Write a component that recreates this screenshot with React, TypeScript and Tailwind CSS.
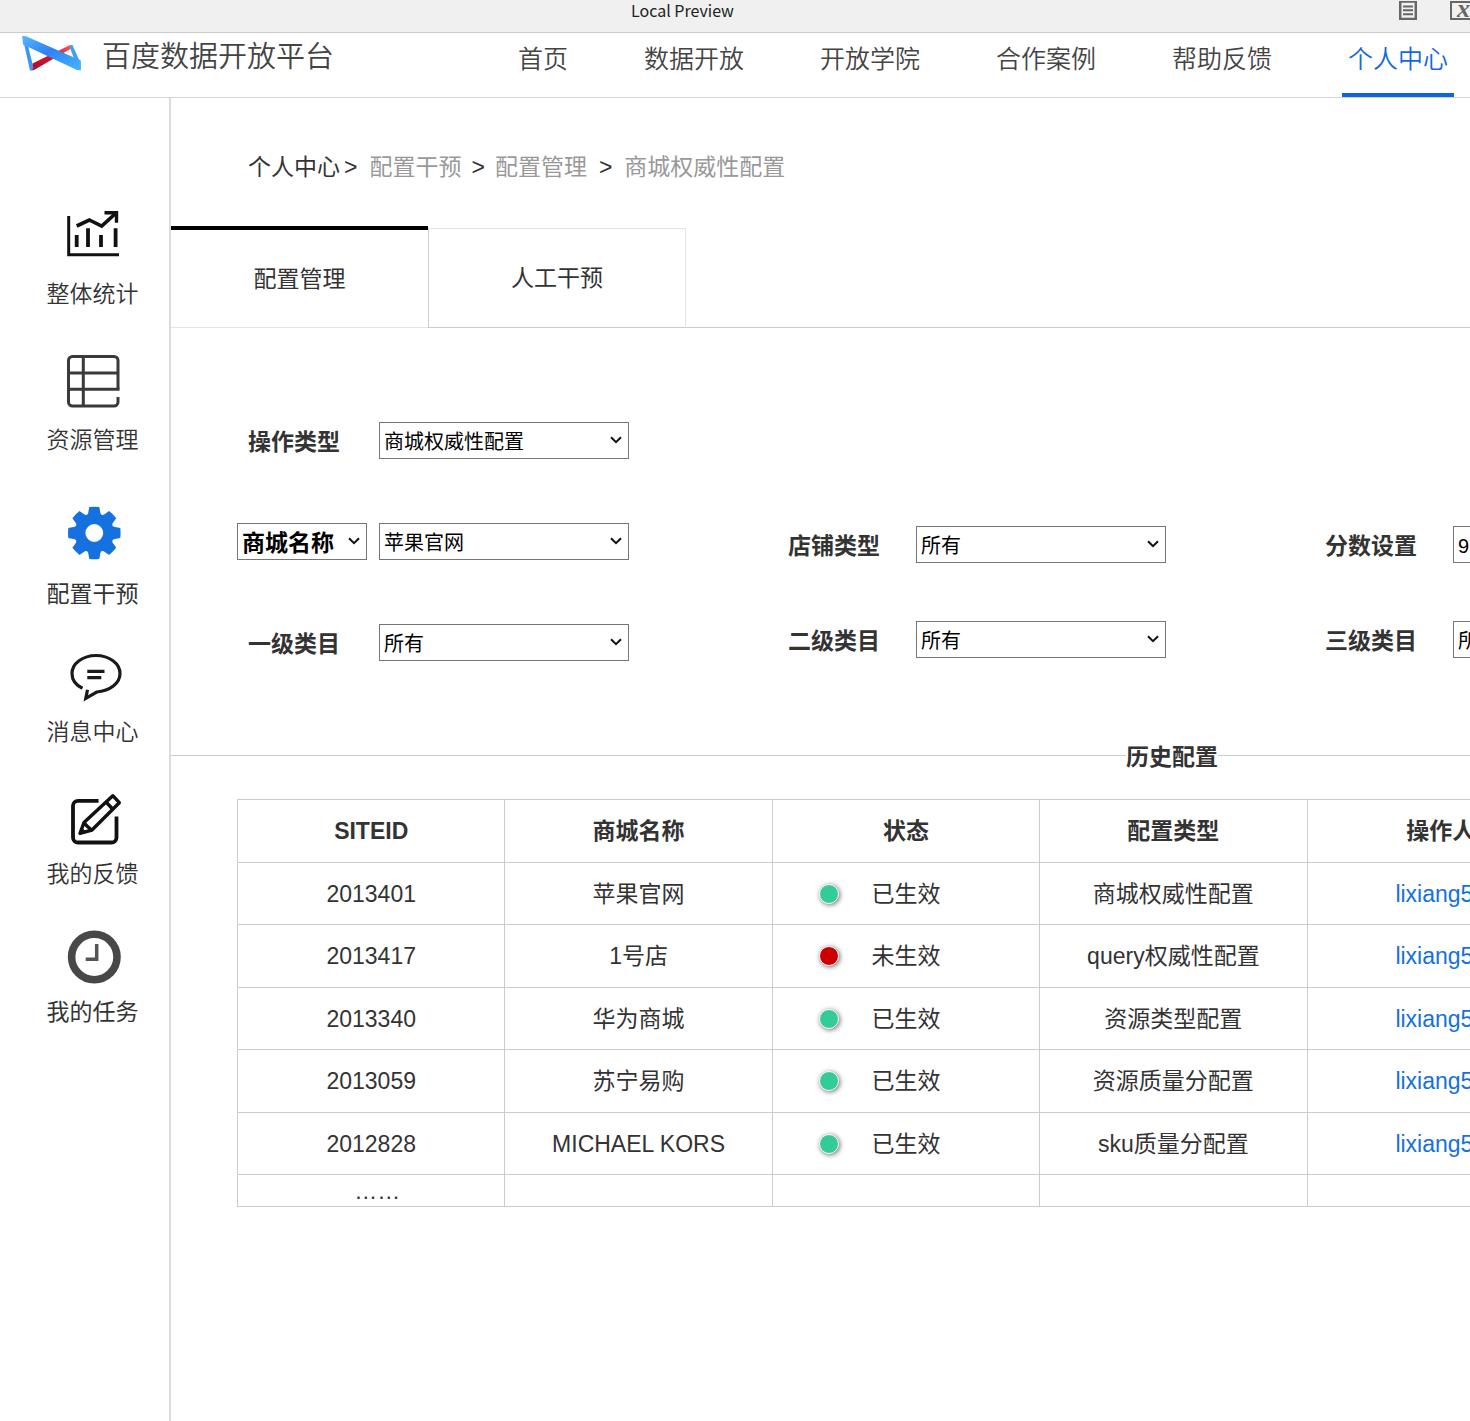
import React, { useState } from 'react';
import clsx from 'clsx';

const StatsIcon = () => (
  <svg className="h-16 w-16" viewBox="0 0 64 64" fill="none" stroke="#111" strokeWidth="3">
    <path d="M7.7 10v38.7H58" />
    <path d="M15.7 20l12.6-6 12.4 6L54.5 7.5" strokeWidth="3.6" />
    <path d="M43.5 6.8h12v10" strokeWidth="3.4" />
    <path d="M15.7 29v12M27 22.3V41M40 29v12M54.6 22.3V41" strokeWidth="3.8" />
  </svg>
);

const ResourceIcon = () => (
  <svg className="h-16 w-16" viewBox="0 0 64 64" fill="none" stroke="#3a3a3a" strokeWidth="3">
    <path d="M57 45v5a4 4 0 0 1-4 4H11.5a4 4 0 0 1-4-4V8.5a4 4 0 0 1 4-4H53a4 4 0 0 1 4 4V37.2" />
    <path d="M22.3 4.5V54M7.5 21H57M7.5 37.2H58.5" />
  </svg>
);

const toothAngles = [0, 45, 90, 135, 180, 225, 270, 315];

const GearIcon = () => (
  <svg className="h-16 w-16" viewBox="0 0 64 64" fill="#1571e0">
    <g transform="translate(33.3 27)">
      <circle r="13.8" fill="none" stroke="#1571e0" strokeWidth="9.8" />
      {toothAngles.map((a) => (
        <path key={a} d="M-5-26Q0-26.6 5-26L6.2-19.5 9-16H-9L-6.2-19.5Z" transform={`rotate(${a})`} />
      ))}
    </g>
  </svg>
);

const MessageIcon = () => (
  <svg className="h-16 w-16" viewBox="0 0 64 64" fill="none" stroke="#1a1a1a" strokeWidth="3.2">
    <path d="M21.5 44.3C14.5 41 11 35.5 11 29.5c0-10 10.7-18 24-18s24 8 24 18c0 9.8-10 17.5-23.3 18.5L24.8 54.3l1.7-8.5" />
    <path d="M26.3 27.3h17.2M26.3 33.7h14" />
  </svg>
);

const FeedbackIcon = () => (
  <svg className="h-16 w-16" viewBox="0 0 64 64" fill="none" stroke="#111" strokeWidth="3.4" strokeLinejoin="round">
    <path d="M37.5 14.8H17a5 5 0 0 0-5 5V51.5a5 5 0 0 0 5 5H50.5a5 5 0 0 0 5-5V30.5" strokeWidth="3.8" />
    <path d="M19 47.3l4-10.8L51.8 9.7l6.5 7L31 44z" />
    <path d="M45 16l6.6 7M23 37l3.5 3.5L30.5 44" />
    <path d="M19 47.3l2-5 3.5 3.5z" fill="#111" strokeWidth="1" />
  </svg>
);

const TaskIcon = () => (
  <svg className="h-16 w-16" viewBox="0 0 64 64" fill="none" stroke="#484848">
    <circle cx="33.3" cy="33" r="22.7" strokeWidth="7.6" />
    <path d="M35.7 20v16.8M37.4 35.2H24.7" stroke="#555" strokeWidth="3.5" />
  </svg>
);

const Logo = () => (
  <svg className="h-9 w-[60px]" viewBox="0 0 60 36">
    <defs>
      <linearGradient id="band" x1="0" y1="0" x2="1" y2="1">
        <stop offset="0" stopColor="#55b8ff" />
        <stop offset="0.45" stopColor="#2d83f5" />
        <stop offset="1" stopColor="#45b4ff" />
      </linearGradient>
      <linearGradient id="ribbon" x1="0" y1="1" x2="1" y2="0">
        <stop offset="0" stopColor="#b0082e" />
        <stop offset="0.55" stopColor="#d0162f" />
        <stop offset="1" stopColor="#ff5a5a" />
      </linearGradient>
    </defs>
    <path d="M9.5 34.5L10.5 27.5 48 9 50 12 12 34z" fill="url(#ribbon)" />
    <path d="M48.5 9L50.5 9 58.5 27V34L56 33 48 12z" fill="#3fa0f5" />
    <path d="M.3 0L5 5.5 11.5 32 10 34.5H8z" fill="#3a97f5" />
    <path d="M.3 0L4 .3 58.8 24.5V34.3L55 34 1 8.5z" fill="url(#band)" />
  </svg>
);

const navItems = ['首页', '数据开放', '开放学院', '合作案例', '帮助反馈', '个人中心'];

const sideItems = [
  { label: '整体统计', icon: StatsIcon, space: 'font-[350]' },
  { label: '资源管理', icon: ResourceIcon, space: 'mt-11 font-[350]' },
  { label: '配置干预', icon: GearIcon, space: 'mt-13' },
  { label: '消息中心', icon: MessageIcon, space: 'mt-9 font-[350]' },
  { label: '我的反馈', icon: FeedbackIcon, space: 'mt-10 font-[350]' },
  { label: '我的任务', icon: TaskIcon, space: 'mt-9' },
];

const rows = [
  { id: '2013401', name: '苹果官网', active: true, type: '商城权威性配置', user: 'lixiang51' },
  { id: '2013417', name: '1号店', active: false, type: 'query权威性配置', user: 'lixiang51' },
  { id: '2013340', name: '华为商城', active: true, type: '资源类型配置', user: 'lixiang51' },
  { id: '2013059', name: '苏宁易购', active: true, type: '资源质量分配置', user: 'lixiang51' },
  { id: '2012828', name: 'MICHAEL KORS', active: true, type: 'sku质量分配置', user: 'lixiang51' },
];

type SelectProps = {
  id: string;
  options: string[];
  bold?: boolean;
  label?: string;
};

const Select = ({ id, options, bold, label }: SelectProps) => (
  <div className={clsx('relative shrink-0', bold ? 'w-[130px]' : 'w-[250px]')}>
    <select
      id={id}
      aria-label={label}
      className={clsx(
        'block h-[37px] w-full appearance-none border border-[#767676] bg-white pt-0.5 pl-1 text-black outline-none',
        bold ? 'text-[23px] font-bold' : 'text-xl'
      )}
    >
      {options.map((o) => (
        <option key={o}>{o}</option>
      ))}
    </select>
    <svg
      className="pointer-events-none absolute top-3.5 right-[7px] h-2 w-3"
      viewBox="0 0 12 8"
      fill="none"
      stroke="#111"
      strokeWidth="2"
    >
      <path d="M1 1.2l5 5 5-5" />
    </svg>
  </div>
);

type FieldProps = { id: string; label: string; options: string[] };

const Field = ({ id, label, options }: FieldProps) => (
  <div className="flex items-center justify-between">
    <label htmlFor={id} className="shrink-0 pt-[3px] whitespace-nowrap font-bold">
      {label}
    </label>
    <Select id={id} options={options} />
  </div>
);

const App = () => {
  const [tab, setTab] = useState<'config' | 'manual'>('config');

  return (
    <div className="flex min-h-screen flex-col overflow-hidden bg-white font-['Liberation_Sans','Noto_Sans_CJK_SC',sans-serif] text-[23px] leading-[34px] text-[#333]">
      {/* Preview bar */}
      <div className="flex h-[33px] items-start border-b border-[#ccc] bg-[#f0f0f0]">
        <span className="ml-[631px] font-['Noto_Sans_CJK_SC',sans-serif] text-base leading-5 text-[#222]">Local Preview</span>
        <div className="ml-auto flex gap-[33px] pt-px">
          <button aria-label="Notes" className="h-[19px] w-[18px]">
            <svg viewBox="0 0 18 19" fill="none" stroke="#666" strokeWidth="2">
              <rect x="1.2" y="0.5" width="15.6" height="17.5" strokeWidth="2.5" />
              <path d="M4 5.5h10M4 9.3h10M4 13.2h10" />
            </svg>
          </button>
          <button
            aria-label="Variables"
            className="flex h-[19px] w-5 items-center justify-end border-2 border-r-0 border-[#666] font-['Liberation_Serif',serif] text-[26px] leading-4 font-bold text-[#666] italic"
          >
            <span className="pb-1">x</span>
          </button>
        </div>
      </div>

      {/* Site header */}
      <header className="flex h-[65px] shrink-0 border-b border-[#d4d4d4]">
        <div className="flex shrink-0 items-start gap-5 pt-[3px] pl-[22px]">
          <Logo />
          <span className="pt-1 text-[29px] leading-[34px] font-[350] whitespace-nowrap text-[#444]">百度数据开放平台</span>
        </div>
        <nav className="ml-[178px] flex shrink-0 gap-16">
          {navItems.map((item) => (
            <a
              key={item}
              href="#"
              className={clsx(
                'border-b-4 px-1.5 pt-2 text-[25px] leading-9 font-[350] whitespace-nowrap',
                item === '个人中心' ? 'border-[#0a66e0] text-[#1268e0]' : 'border-transparent text-[#444]'
              )}
            >
              {item}
            </a>
          ))}
        </nav>
      </header>

      <div className="flex flex-1">
        {/* Sidebar */}
        <aside className="flex w-[171px] shrink-0 flex-col items-center border-r-2 border-[#dcdcdc] pt-27 pl-4">
          {sideItems.map(({ label, icon: Icon, space }) => (
            <a key={label} href="#" className={clsx('flex flex-col items-center gap-2.5 leading-7', space)}>
              <Icon />
              {label}
            </a>
          ))}
        </aside>

        <main className="min-w-0 flex-1 overflow-hidden">
          {/* Breadcrumb */}
          <nav className="flex pt-[52px] pl-[77px] whitespace-nowrap">
            <a href="#">个人中心</a>
            <span className="mr-3 ml-1">&gt;</span>
            <a href="#" className="text-[#999]">配置干预</a>
            <span className="mx-2.5">&gt;</span>
            <a href="#" className="text-[#999]">配置管理</a>
            <span className="mx-3">&gt;</span>
            <span className="text-[#999]">商城权威性配置</span>
          </nav>

          {/* Tabs */}
          <div className="mt-[42px] flex h-[102px] items-end">
            <button
              onClick={() => setTab('config')}
              className={clsx(
                'w-[257px] shrink-0 border-b border-b-[#e4e4e4]',
                tab === 'config' ? 'h-[102px] border-t-4 border-t-black' : 'h-[100px] border-t border-t-[#e4e4e4]'
              )}
            >
              配置管理
            </button>
            <button
              onClick={() => setTab('manual')}
              className={clsx(
                'w-[258px] shrink-0 border-x border-b border-r-[#e4e4e4] border-b-[#ccc] border-l-[#ccc]',
                tab === 'manual' ? 'h-[102px] border-t-4 border-t-black' : 'h-[100px] border-t border-t-[#e4e4e4]'
              )}
            >
              人工干预
            </button>
            <div className="flex-1 border-b border-[#ccc]" />
          </div>

          {/* Filters */}
          <div className="flex gap-[159px] pt-[94px] pl-[66px]">
            <div className="flex w-[392px] shrink-0 flex-col gap-16">
              <div className="pl-[11px]">
                <Field id="op-type" label="操作类型" options={['商城权威性配置', '资源类型配置', '资源质量分配置']} />
              </div>
              <div className="flex items-center gap-3">
                <Select id="search-by" label="查询方式" options={['商城名称', 'SITEID']} bold />
                <Select id="mall" label="商城名称" options={['苹果官网', '1号店', '华为商城', '苏宁易购']} />
              </div>
              <div className="pl-[11px]">
                <Field id="cat-1" label="一级类目" options={['所有']} />
              </div>
            </div>
            <div className="flex w-[378px] shrink-0 flex-col gap-[58px] pt-[104px]">
              <Field id="shop-type" label="店铺类型" options={['所有']} />
              <Field id="cat-2" label="二级类目" options={['所有']} />
            </div>
            <div className="flex w-[378px] shrink-0 flex-col gap-[58px] pt-[104px]">
              <Field id="score" label="分数设置" options={['9分']} />
              <Field id="cat-3" label="三级类目" options={['所有']} />
            </div>
          </div>

          {/* History */}
          <div className="mt-[76px] flex w-[2002px] items-center">
            <div className="h-px flex-1 bg-[#ccc]" />
            <h2 className="pt-[3px] font-bold">历史配置</h2>
            <div className="h-px flex-1 bg-[#ccc]" />
          </div>
          <table className="mt-[25px] ml-[66px] w-[1338px] table-fixed border-collapse text-center [&_td]:border [&_td]:border-[#ccc] [&_th]:border [&_th]:border-[#ccc]">
            <thead>
              <tr className="h-[63px]">
                <th>SITEID</th>
                <th>商城名称</th>
                <th>状态</th>
                <th>配置类型</th>
                <th>操作人</th>
              </tr>
            </thead>
            <tbody>
              {rows.map((row) => (
                <tr key={row.id} className="odd:h-[62px] even:h-[63px]">
                  <td>{row.id}</td>
                  <td>{row.name}</td>
                  <td>
                    <div className="flex items-center justify-center gap-8">
                      <span
                        className={clsx(
                          'h-5 w-5 rounded-full border border-white shadow-[1px_1px_5px_rgba(0,0,0,0.6)]',
                          row.active ? 'bg-[#33cc99]' : 'bg-[#cc0000]'
                        )}
                      />
                      <span>{row.active ? '已生效' : '未生效'}</span>
                      <span className="w-5" />
                    </div>
                  </td>
                  <td>{row.type}</td>
                  <td>
                    <a href="#" className="text-[#1571e0]">{row.user}</a>
                  </td>
                </tr>
              ))}
              <tr className="h-8">
                <td className="pl-3 leading-7">……</td>
                <td />
                <td />
                <td />
                <td />
              </tr>
            </tbody>
          </table>
        </main>
      </div>
    </div>
  );
};

export default App;
